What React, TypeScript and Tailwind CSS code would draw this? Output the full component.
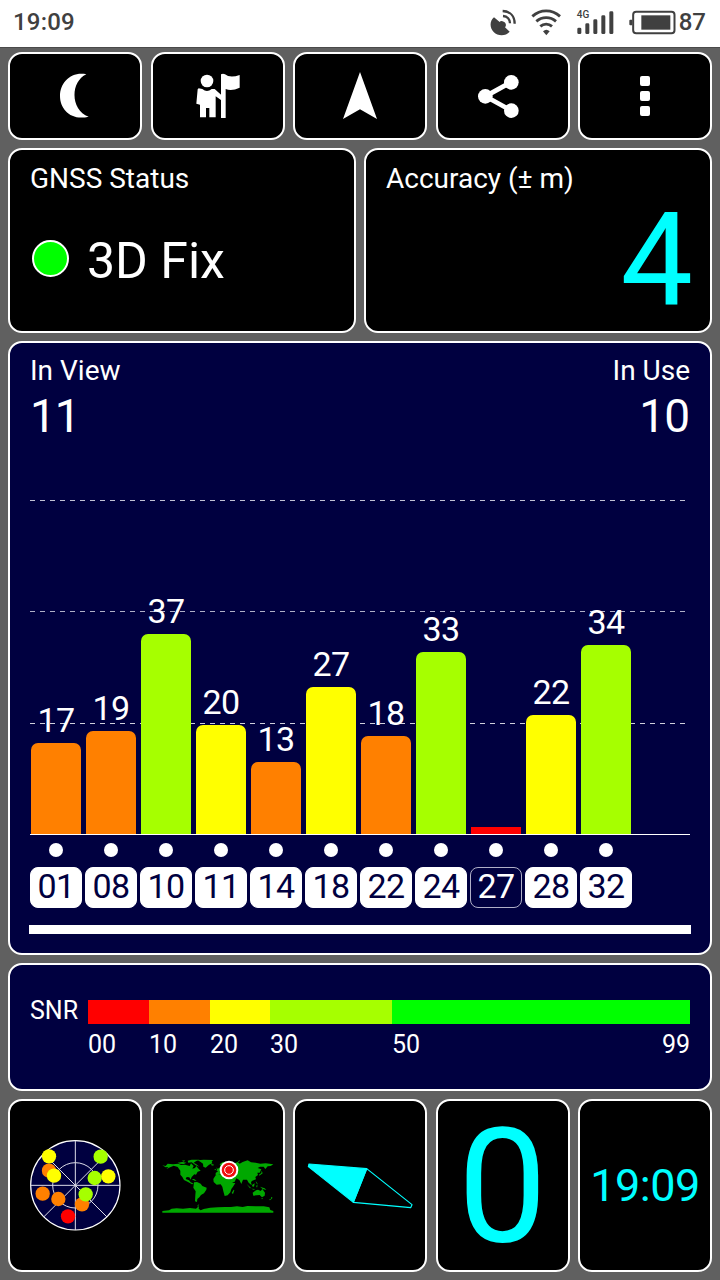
import React from 'react';

interface Satellite {
  id: string;
  snr: number | null;
  height: number;
  color: string;
  inUse: boolean;
}

const satellites: Satellite[] = [
  { id: '01', snr: 17, height: 91, color: 'bg-[#ff8000]', inUse: true },
  { id: '08', snr: 19, height: 103, color: 'bg-[#ff8000]', inUse: true },
  { id: '10', snr: 37, height: 200, color: 'bg-[#a6ff00]', inUse: true },
  { id: '11', snr: 20, height: 109, color: 'bg-[#ffff00]', inUse: true },
  { id: '14', snr: 13, height: 72, color: 'bg-[#ff8000]', inUse: true },
  { id: '18', snr: 27, height: 147, color: 'bg-[#ffff00]', inUse: true },
  { id: '22', snr: 18, height: 98, color: 'bg-[#ff8000]', inUse: true },
  { id: '24', snr: 33, height: 182, color: 'bg-[#a6ff00]', inUse: true },
  { id: '27', snr: null, height: 7, color: 'bg-[#ff0000]', inUse: false },
  { id: '28', snr: 22, height: 119, color: 'bg-[#ffff00]', inUse: true },
  { id: '32', snr: 34, height: 189, color: 'bg-[#a6ff00]', inUse: true },
];

const skyDots = [
  { x: 147, y: 227, fill: '#ff8000' },
  { x: 147, y: 184, fill: '#ffff00' },
  { x: 162, y: 242, fill: '#ffff00' },
  { x: 128, y: 296, fill: '#ff8000' },
  { x: 175, y: 312, fill: '#ff8000' },
  { x: 204, y: 364, fill: '#ff0000' },
  { x: 246, y: 328, fill: '#ff8000' },
  { x: 257, y: 298, fill: '#a6ff00' },
  { x: 284, y: 249, fill: '#a6ff00' },
  { x: 325, y: 244, fill: '#ffff00' },
  { x: 302, y: 185, fill: '#a6ff00' },
];

const cardClassName = "rounded-[14px] border-2 border-white";
const tileClassName = "flex items-center justify-center rounded-[14px] border-2 border-white bg-black";

const StatusBar: React.FC = () => (
  <header className="flex h-12 items-center justify-between border-b border-[#4a4a4a] bg-white pl-[13px] pr-[14px] text-[#404040]">
    <span className="pb-[3px] text-[24px] leading-none font-medium tracking-[0.2px]">19:09</span>
    <div className="flex items-center pb-[3px]">
      {/* Satellite dish */}
      <svg className="mr-[15px] h-[27px] w-[26px]" viewBox="31 25 78 81" fill="currentColor">
        <path d="M43 50 C30 60 29 81 42 94 C55 107 78 107 90 93 L76 80 C81 74 79 66 72 63 C67 60 62 60 60 64 Z" />
        <path d="M70 46 C83 47 91 56 91 68 M69 31 C92 32 105 47 105 69" fill="none" stroke="currentColor" strokeWidth="7" />
      </svg>
      {/* Wifi */}
      <svg className="mr-4 h-[27px] w-[30px]" viewBox="154 25 90 81" fill="none" stroke="currentColor" strokeWidth="8.500">
        <path d="M158 47 C182 25 217 25 241 47" />
        <path d="M170 62 C187 47 212 47 229 62" />
        <path d="M182 77 C192 68 207 68 217 77" />
        <path d="M190 92 Q200 83 210 92 L200 104 Z" fill="currentColor" stroke="none" />
      </svg>
      {/* Mobile signal */}
      <div className="relative mr-[15px] h-[27px] w-[37px]">
        <span className="absolute top-[1px] left-0 text-[10px] leading-none font-medium">4G</span>
        <svg className="h-[27px] w-[37px]" viewBox="290 25 111 81" fill="currentColor">
          <rect x="291" y="81" width="12" height="19" rx="4" />
          <rect x="315" y="68" width="12" height="32" rx="4" />
          <rect x="339" y="56" width="12" height="44" rx="4" />
          <rect x="363" y="44" width="12" height="56" rx="4" />
          <rect x="387" y="32" width="12" height="68" rx="4" />
        </svg>
      </div>
      {/* Battery */}
      <svg className="mr-[3px] h-[27px] w-[47px]" viewBox="446 25 141 81" fill="currentColor">
        <rect x="458.500" y="33.500" width="124" height="64" rx="9" fill="none" stroke="currentColor" strokeWidth="6" />
        <path d="M456 57 H450 Q447 57 447 60 V71 Q447 74 450 74 H456 Z" />
        <rect x="483" y="44" width="87" height="43" />
      </svg>
      <span className="text-[24px] leading-none font-medium">87</span>
    </div>
  </header>
);

const Toolbar: React.FC = () => (
  <nav className="grid h-[88px] grid-cols-5 gap-[8.5px]">
    <button className={tileClassName}>
      <svg className="size-12" viewBox="153 96 144 144" fill="#fff">
        <path d="M259 103 C212 94 180 129 180 168 C180 208 213 243 266 230 C211 211 210 126 259 103 Z" />
      </svg>
    </button>
    <button className={tileClassName}>
      <svg className="size-12" viewBox="582 96 144 144" fill="#fff">
        <circle cx="621" cy="123" r="19" />
        <path d="M596 145 L607 147 Q621 159 635 147 L644 147 L664 165 V181 L647 169 V232 H628 V204 H618 V232 H600 V194 L589 191 L593 148 Z" />
        <path d="M663 103 Q669 99 675 103 Q690 115 719 105 V143 Q695 154 677 147 V234 H663 Z" />
      </svg>
    </button>
    <button className={tileClassName}>
      <svg className="size-12" viewBox="1008 96 144 144" fill="#fff">
        <path d="M1080 96 L1131 237 L1080 208 L1029 237 Z" />
      </svg>
    </button>
    <button className={tileClassName}>
      <svg className="h-12 w-14" viewBox="345 96 168 144" fill="#fff" stroke="#fff">
        <path d="M454 126 L376 169 L454 212" fill="none" strokeWidth="14" />
        <circle cx="376" cy="169" r="22" stroke="none" />
        <circle cx="454" cy="127" r="22" stroke="none" />
        <circle cx="454" cy="212" r="22" stroke="none" />
      </svg>
    </button>
    <button className={tileClassName}>
      <span className="flex flex-col gap-[5px]">
        <i className="size-2.5 rounded-[2px] bg-white" />
        <i className="size-2.5 rounded-[2px] bg-white" />
        <i className="size-2.5 rounded-[2px] bg-white" />
      </span>
    </button>
  </nav>
);

const StatusCards: React.FC = () => (
  <div className="grid h-[185px] grid-cols-2 gap-2">
    <section className={`${cardClassName} bg-black px-5 pt-[15px]`}>
      <h2 className="text-[28px] leading-[28px]">GNSS Status</h2>
      <div className="mt-[43px] flex items-center pl-0.5">
        <span className="mr-[18px] -mt-[5px] size-[37px] rounded-full border-2 border-white bg-[#00ff00]" />
        <span className="text-[50px] leading-[50px]">3D Fix</span>
      </div>
    </section>
    <section className={`${cardClassName} bg-black pr-[17px] pl-5 pt-[15px]`}>
      <h2 className="text-[28px] leading-[28px]">Accuracy (± m)</h2>
      <p className="mt-[2px] text-right text-[129px] leading-[129px] text-[#00ffff]">4</p>
    </section>
  </div>
);

const SignalChart: React.FC = () => (
  <section className={`${cardClassName} h-[614px] bg-[#000040] px-5 pt-[14px]`}>
    <div className="flex h-[82px] justify-between">
      <div>
        <h2 className="text-[28px] leading-[28px]">In View</h2>
        <p className="mt-[8px] text-[46px] leading-[46px] tracking-[-1px]">11</p>
      </div>
      <div className="text-right">
        <h2 className="text-[28px] leading-[28px]">In Use</h2>
        <p className="mt-[8px] pr-px text-[46px] leading-[46px] tracking-[-1px]">10</p>
      </div>
    </div>

    {/* Bars */}
    <div className="relative mt-[61px] h-[335px] border-b border-white">
      <div className="absolute inset-0 flex flex-col">
        <div className="h-[111px] bg-[repeating-linear-gradient(90deg,#c0c0d4_0_5px,transparent_5px_10px)] bg-[length:100%_1px] bg-no-repeat" />
        <div className="h-[112px] bg-[repeating-linear-gradient(90deg,#b0b0c8_0_5px,transparent_5px_10px)] bg-[length:100%_1px] bg-no-repeat" />
        <div className="h-[111px] bg-[repeating-linear-gradient(90deg,#d0d0dc_0_5px,transparent_5px_10px)] bg-[length:100%_1px] bg-no-repeat" />
      </div>
      <div className="relative flex h-full items-end gap-[5px] pl-px">
        {satellites.map(sat => (
          <div key={sat.id} className="flex w-[50px] flex-col items-center">
            {sat.snr !== null && <span className="pb-[6px] text-[34px] leading-[34px] tracking-[-0.5px]">{sat.snr}</span>}
            <div
              className={`w-full ${sat.snr !== null ? 'rounded-t-[7px]' : ''} ${sat.color}`}
              style={{ height: sat.height }}
            />
          </div>
        ))}
      </div>
    </div>

    {/* Satellite ids */}
    <div className="mt-2 flex gap-[3px]">
      {satellites.map(sat => (
        <div key={sat.id} className="flex w-[52px] flex-col items-center gap-[10px]">
          <span className="size-[14px] rounded-full bg-white" />
          <span
            className={`flex h-[41px] w-full items-center justify-center rounded-[8px] border pb-[3px] text-[34px] leading-none tracking-[-0.5px] ${
              sat.inUse ? 'border-white bg-white text-[#000040]' : 'border-[#b0b0c8] text-white'
            }`}
          >
            {sat.id}
          </span>
        </div>
      ))}
    </div>

    <div className="-mx-px mt-[17px] h-[9px] bg-white" />
  </section>
);

const SnrLegend: React.FC = () => (
  <section className={`${cardClassName} flex h-[128px] bg-[#000040] px-5 pt-[35px]`}>
    <span className="w-[58px] text-[25px] leading-[22px]">SNR</span>
    <div className="flex-1">
      <div className="flex h-6">
        <div className="w-[61px] bg-[#ff0000]" />
        <div className="w-[61px] bg-[#ff8000]" />
        <div className="w-[60px] bg-[#ffff00]" />
        <div className="w-[122px] bg-[#a6ff00]" />
        <div className="flex-1 bg-[#00ff00]" />
      </div>
      <div className="mt-2 flex text-[25px] leading-[25px]">
        <span className="w-[61px]">00</span>
        <span className="w-[61px]">10</span>
        <span className="w-[60px]">20</span>
        <span className="w-[122px]">30</span>
        <span className="flex-1">50</span>
        <span>99</span>
      </div>
    </div>
  </section>
);

const SkyView: React.FC = () => (
  <svg className="size-24 shrink-0" viewBox="81 129 288 288">
    <circle cx="226" cy="271" r="134" fill="#000040" stroke="#fff" strokeWidth="3.500" />
    <g fill="none" stroke="#dcdce8" strokeWidth="3">
      <circle cx="226" cy="271" r="68" />
      <path d="M226 137 V405 M92 271 H360 M131 176 L321 366 M321 176 L131 366" />
    </g>
    {skyDots.map((dot, i) => (
      <circle key={i} cx={dot.x} cy={dot.y} r="21.500" fill={dot.fill} />
    ))}
  </svg>
);

const WorldMap: React.FC = () => (
  <svg className="h-[60px] w-[114px] shrink-0" viewBox="32 48 342 180">
    <g fill="#00a800">
      {/* North America */}
      <path d="M36 76 L46 78 L52 71 L68 73 L84 71 L92 75 L104 74 L118 78 L122 70 L130 78 L126 86 L134 84 L138 78 L146 88 L151 92 L142 95 L137 104 L132 103 L124 111 L121 119 L117 112 L109 111 L106 117 L116 121 L121 127 L130 131 L125 133 L113 126 L101 120 L96 111 L90 104 L90 92 L82 81 L70 77 L56 83 L48 88 L54 81 L46 82 Z" />
      <path d="M82 68 L96 66 L108 68 L100 72 L88 71 Z M112 62 L124 59 L148 59 L138 63 L130 68 L138 73 L147 80 L136 76 L124 67 L114 68 Z M94 62 L104 61 L101 65 Z" />
      <path d="M142 61 L160 59 L188 60 L184 65 L186 70 L176 74 L166 83 L159 80 L158 71 L151 66 Z M182 73 L190 73 L189 77 L183 76 Z" />
      {/* South America */}
      <path d="M131 127 L140 126 L151 131 L156 138 L169 143 L168 149 L161 160 L152 165 L147 172 L141 177 L140 186 L134 184 L135 166 L136 154 L129 143 Z" />
      <path d="M124 117 H131 L139 122 H133 Z" />
      {/* Europe and Asia */}
      <path d="M196 99 L203 94 L200 88 L212 80 L208 73 L217 66 L230 65 L242 71 L253 70 L262 66 L268 71 L277 66 L292 61 L302 67 L316 68 L330 71 L346 70 L369 73 L361 78 L352 79 L345 87 L340 80 L329 80 L322 84 L333 88 L328 98 L321 98 L323 105 L315 111 L317 118 L306 122 L302 126 L304 136 L295 128 L290 119 L278 119 L273 132 L267 120 L258 115 L253 125 L244 129 L236 116 L226 106 L216 103 L209 101 L204 105 L196 105 Z" />
      <path d="M198 82 L203 88 L206 92 L199 93 L200 88 Z M192 87 L197 87 L195 91 Z M334 92 L337 100 L327 107 L326 104 L333 99 Z M262 65 L269 60 L266 66 Z" />
      {/* Africa */}
      <path d="M196 106 L209 103 L225 109 L235 110 L241 123 L247 129 H255 L248 140 L243 147 L240 157 L232 166 L223 168 L219 154 L216 140 L211 133 L199 134 L190 126 L189 117 Z" />
      <path d="M250 149 L252 151 L248 162 L244 159 Z" />
      {/* Indonesia and Australia */}
      <path d="M289 132 L302 144 L299 145 Z M302 146 L314 147 L311 149 Z M306 134 L313 130 L311 140 L305 139 Z M317 137 L322 136 L320 143 Z M316 123 L320 128 L323 134 L318 130 Z M329 140 L343 145 L348 150 L337 147 Z" />
      <path d="M307 158 L317 151 L323 149 L331 153 L336 147 L344 158 L343 167 L335 172 L328 165 L309 167 Z M333 175 L338 174 L335 178 Z M362 171 L367 173 L359 181 L356 179 L362 176 Z" />
      {/* Antarctica */}
      <path d="M36 213 L56 211 L64 206 L79 205 L98 206 L119 204 L137 206 L146 198 L145 206 L151 211 L160 207 L180 203 L202 202 L224 201 L242 201 L260 199 L277 201 L291 198 L316 199 L340 199 L357 202 L360 210 L369 213 V218 H36 Z" />
      <path d="M140 199 L144 194 L147 193 L143 199 Z" />
    </g>
    {/* Position marker */}
    <circle cx="236" cy="90" r="28" fill="#fff" />
    <circle cx="236" cy="90" r="22" fill="#f01010" />
    <circle cx="236" cy="90" r="13" fill="#f01010" stroke="#fff" strokeWidth="3" />
  </svg>
);

const BottomTiles: React.FC = () => (
  <div className="grid h-[173px] grid-cols-5 gap-[8.5px] text-[#00ffff]">
    <section className={tileClassName}>
      <SkyView />
    </section>
    <section className={tileClassName}>
      <WorldMap />
    </section>
    <section className={tileClassName}>
      <svg className="h-[60px] w-[120px] shrink-0" viewBox="30 182 360 180" stroke="#00ffff" strokeWidth="3.500" strokeLinejoin="round">
        <path d="M57 206 L230 220 L190 321 L55 214 Z" fill="#00ffff" />
        <path d="M230 220 L366 328 L362 337 L190 321 Z" fill="none" />
      </svg>
    </section>
    <section className={tileClassName}>
      <span className="pt-[2px] text-[159px] leading-[160px]">0</span>
    </section>
    <section className={tileClassName}>
      <span className="pt-px text-[45px] leading-[46px] tracking-[-0.5px]">19:09</span>
    </section>
  </div>
);

const App: React.FC = () => {
  return (
    <div className="flex h-[1280px] w-[720px] flex-col overflow-hidden bg-[#606060] font-['Roboto',sans-serif] text-white">
      <StatusBar />
      <main className="flex flex-col gap-2 px-2 pt-1">
        <Toolbar />
        <StatusCards />
        <SignalChart />
        <SnrLegend />
        <BottomTiles />
      </main>
    </div>
  );
};

export default App;
